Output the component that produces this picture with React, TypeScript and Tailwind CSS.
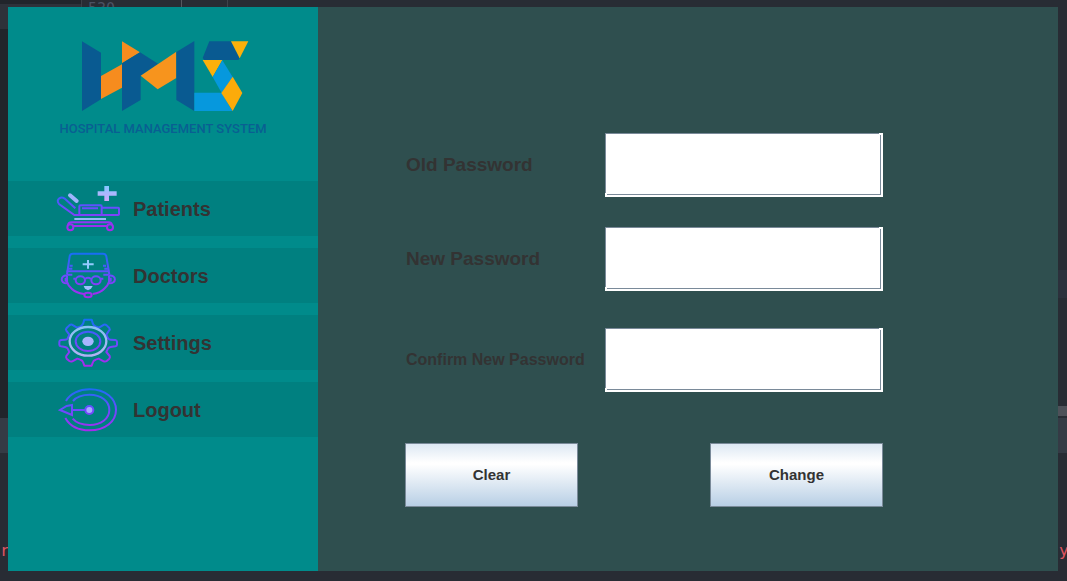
import type { ReactNode } from "react";

function Logo() {
  return (
    <svg className="block h-[85px] w-[230px]" viewBox="0 0 690 255" role="img" aria-label="HMS">
      <path fill="#095a91" d="M96 34l57 34v140l-57 35z" />
      <path fill="#f68c1e" d="M153 138l63-35v70l-63 34z" />
      <path fill="#f68c1e" d="M216 34l54 33-54 33z" />
      <path fill="#095a91" d="M216 100l54-33 54 34-52 36v73l-56 33z" />
      <path fill="#f7941d" d="M272 137l107-72v79l-56 34z" />
      <path fill="#095a91" d="M379 66l54-33v210l-54-33z" />
      <path fill="#095a91" d="M478 34h65l26 50-4 6H463l-5-6z" />
      <path fill="#fcb00b" d="M543 34h52l-26 51z" />
      <path fill="#fcb00b" d="M458 90h59l-29 51z" />
      <path fill="#0698dd" d="M517 91l31 50-33 48-27-48z" />
      <path fill="#0698dd" d="M433 188h82l32 55H433z" />
      <path fill="#fcab0a" d="M548 140l29 49-29 54-34-54z" />
    </svg>
  );
}

function Icon({ id, children }: { id: string; children: ReactNode }) {
  return (
    <svg className="block h-[55px] w-[83px] shrink-0" viewBox="0 9 249 165" fill="none" stroke={`url(#${id})`} strokeWidth="6" aria-hidden="true">
      <defs>
        <linearGradient id={id} gradientUnits="userSpaceOnUse" x1="0" y1="22" x2="0" y2="160">
          <stop offset="0" stopColor="#1470f4" />
          <stop offset=".5" stopColor="#6a4cff" />
          <stop offset="1" stopColor="#ab28ec" />
        </linearGradient>
        <linearGradient id={`${id}-light`} gradientUnits="userSpaceOnUse" x1="0" y1="22" x2="0" y2="160">
          <stop offset="0" stopColor="#7cc4f4" />
          <stop offset="1" stopColor="#c0acf4" />
        </linearGradient>
        <linearGradient id={`${id}-cross`} gradientUnits="userSpaceOnUse" x1="0" y1="24" x2="0" y2="69">
          <stop offset="0" stopColor="#84c8ff" />
          <stop offset="1" stopColor="#d0a8fc" />
        </linearGradient>
      </defs>
      {children}
    </svg>
  );
}

function PatientsIcon() {
  return (
    <Icon id="bed">
      <path d="M87 111H73L27 78q-8-10 1-17 7-5 15 0l33 30M88 111V85q0-3 4-3h60q3 0 3 3v26zM96 91h48M155 89h50q2 0 2 3v17q0 2-3 2h-49" />
      <path stroke="#a0b4fc" strokeWidth="12" strokeLinecap="round" d="M60 52l20 17" />
      <path stroke="#94b8f8" strokeWidth="6" d="M73 123h95" />
      <path fill="url(#bed-cross)" stroke="none" d="M163 24h14v16h23v13h-23v16h-14V53h-20V40h20z" />
      <path d="M54 140q2-7 10-7h112q8 0 10 7M71 144h100" />
      <circle cx="61" cy="148" r="9" />
      <circle cx="180" cy="148" r="9" />
    </Icon>
  );
}

function DoctorsIcon() {
  return (
    <Icon id="doctor">
      <path d="M51 88l8-54q1-8 10-8h90q8 0 10 8l9 54" />
      <path d="M50 79h127M53 71h14M163 71h14M59 62h9M159 62h9M50 89h17M160 89h18" />
      <path d="M51 92c-20-3-22 24 0 23M177 92c24-3 23 25 0 23" />
      <path d="M51 92v18q3 12 15 22 10 11 36 15M177 92v18q-3 12-15 22-10 11-34 15" />
      <path d="M47 98v12M182 98v12" />
      <ellipse cx="91" cy="106" rx="14" ry="12" />
      <ellipse cx="138" cy="106" rx="14" ry="12" />
      <path d="M105 102q9-7 18 0M70 101h7M152 101h8" />
      <ellipse cx="114" cy="150" rx="11" ry="7" />
      <path fill="#9dbfff" stroke="none" d="M101 123h27l-5 8-9 5-9-5z" />
      <path stroke="#93cbff" strokeWidth="6" d="M98 58h33M114 45v26" />
    </Icon>
  );
}

function SettingsIcon() {
  return (
    <Icon id="gear">
      <path strokeLinejoin="round" d="M99 36l4-13h22l4 13q3 6 9 8l9 3 15-9q4-1 8 2l8 8q3 4-1 8l-8 12 5 11q3 4 8 4l14 1q5 1 5 5v9q0 4-5 5l-14 2q-6 1-8 5l-5 10 10 12q2 4-1 8l-8 7q-4 3-9 1l-15-8-9 3q-7 2-8 7l-4 11h-22l-4-11q-1-5-8-7l-9-3-15 8q-5 2-9-1l-8-7q-3-4-1-8l9-12-5-10q-2-4-8-5l-12-2q-5-1-5-5v-9q0-4 5-5l12-1q6 0 8-4l5-11-9-12q-3-4 1-8l8-8q4-3 8-2l15 9 9-3q6-2 8-8z" />
      <ellipse cx="114" cy="88" rx="55" ry="43" stroke="url(#gear-light)" strokeWidth="7" />
      <ellipse cx="114" cy="88" rx="37" ry="29" />
      <ellipse cx="114" cy="88" rx="17" ry="14" fill="#a8b5ff" stroke="none" />
    </Icon>
  );
}

function LogoutIcon() {
  return (
    <Icon id="exit">
      <path d="M48 66C60 44 88 31 119 31c47 0 79 27 79 62s-33 61-79 61c-32 0-59-12-73-37" />
      <path d="M69 66C80 53 98 47 119 47c34 0 59 20 59 46s-25 45-59 45c-21 0-40-6-51-19" />
      <path d="M66 78v30L30 93l20-12zM66 93h40" />
      <circle cx="118" cy="93" r="12" fill="#a5adff" />
    </Icon>
  );
}

const navItems = [
  { label: "Patients", icon: <PatientsIcon /> },
  { label: "Doctors", icon: <DoctorsIcon /> },
  { label: "Settings", icon: <SettingsIcon /> },
  { label: "Logout", icon: <LogoutIcon /> },
];

function Sidebar() {
  return (
    <aside className="w-[310px] shrink-0 bg-[#008b8b]">
      <div className="h-[174px] pt-[23px]">
        <div className="pl-[42px]">
          <Logo />
        </div>
        <p className="text-center font-[Roboto,sans-serif] text-[13px] leading-7 font-medium whitespace-nowrap text-[#095f92]">
          HOSPITAL MANAGEMENT SYSTEM
        </p>
      </div>
      <nav className="flex flex-col gap-3">
        {navItems.map(({ label, icon }) => (
          <button key={label} type="button" className="flex h-[55px] w-full items-center bg-[#008080] pl-[42px] text-xl font-bold text-[#333333]">
            {icon}
            {label}
          </button>
        ))}
      </nav>
    </aside>
  );
}

function PasswordField({ id, label, small }: { id: string; label: string; small?: boolean }) {
  return (
    <div className="flex items-center">
      <label htmlFor={id} className={`w-[200px] shrink-0 pl-px font-bold whitespace-nowrap text-[#333333] ${small ? "text-base" : "text-[19px]"}`}>
        {label}
      </label>
      <div className="relative flex-1 bg-white pr-[2px] pb-[2px] before:absolute before:bottom-[2px] before:left-0 before:size-[2px] before:bg-white after:absolute after:top-0 after:right-[2px] after:size-[2px] after:bg-white">
        <input id={id} type="password" className="block h-[62px] w-full border border-[#7a8a99] bg-white px-2 text-lg outline-none" />
      </div>
    </div>
  );
}

function FormButton({ type, children }: { type: "reset" | "submit"; children: ReactNode }) {
  return (
    <button
      type={type}
      className="h-16 w-[173px] border border-[#7a8a99] bg-[linear-gradient(to_bottom,#dde8f3_0%,#ffffff_30%,#ffffff_33%,#b8cfe5_100%)] pt-px text-[15px] font-bold text-[#333333]"
    >
      {children}
    </button>
  );
}

export default function App() {
  return (
    <div className="flex min-h-screen flex-col bg-[#282c34] font-['Liberation_Sans',Arial,sans-serif]">
      <div className="flex h-[7px] overflow-hidden" aria-hidden="true">
        <div className="w-[81px] border-t-4 border-[#21252b] bg-[#2e323a]" />
        <div className="w-[101px] border-x border-l-[#3b3f47] border-r-[#55585f] pl-[6px] font-['DejaVu_Sans_Mono',monospace] text-[15px] leading-[19px] text-[#4b5263]">530</div>
        <div className="w-[46px] border-r border-[#3f434b]" />
      </div>
      <div className="flex flex-1">
        <div className="flex w-2 shrink-0 flex-col overflow-hidden font-['DejaVu_Sans_Mono',monospace]" aria-hidden="true">
          <div className="h-[22px] bg-[#2e323a]" />
          <div className="h-[389px] bg-[#21252b]" />
          <div className="h-[35px] bg-[#353b45]" />
          <div className="pt-[88px] text-base leading-5 text-[#e05561]">r</div>
        </div>
        <Sidebar />
        <main className="min-w-0 flex-1 bg-[#2f4f4f] pt-[126px] pl-[87px]">
          <form className="w-full max-w-[478px]" onSubmit={(event) => event.preventDefault()}>
            <div className="flex flex-col">
              <PasswordField id="old-password" label="Old Password" />
              <div className="pt-[30px] pb-[37px]">
                <PasswordField id="new-password" label="New Password" />
              </div>
              <PasswordField id="confirm-password" label="Confirm New Password" small />
            </div>
            <div className="mt-[51px] flex justify-between">
              <FormButton type="reset">Clear</FormButton>
              <FormButton type="submit">Change</FormButton>
            </div>
          </form>
        </main>
        <div className="flex w-[9px] shrink-0 flex-col overflow-hidden pt-[263px] font-['DejaVu_Sans_Mono',monospace]" aria-hidden="true">
          <div className="h-7 bg-[#2c313c]" />
          <div className="mt-[108px] h-[10px] bg-[#4e5159]" />
          <div className="mt-[2px] h-[35px] bg-[#353b45]" />
          <div className="pt-[88px] pl-px text-base leading-5 text-[#e05561]">y</div>
        </div>
      </div>
      <div className="h-[10px]" />
    </div>
  );
}
